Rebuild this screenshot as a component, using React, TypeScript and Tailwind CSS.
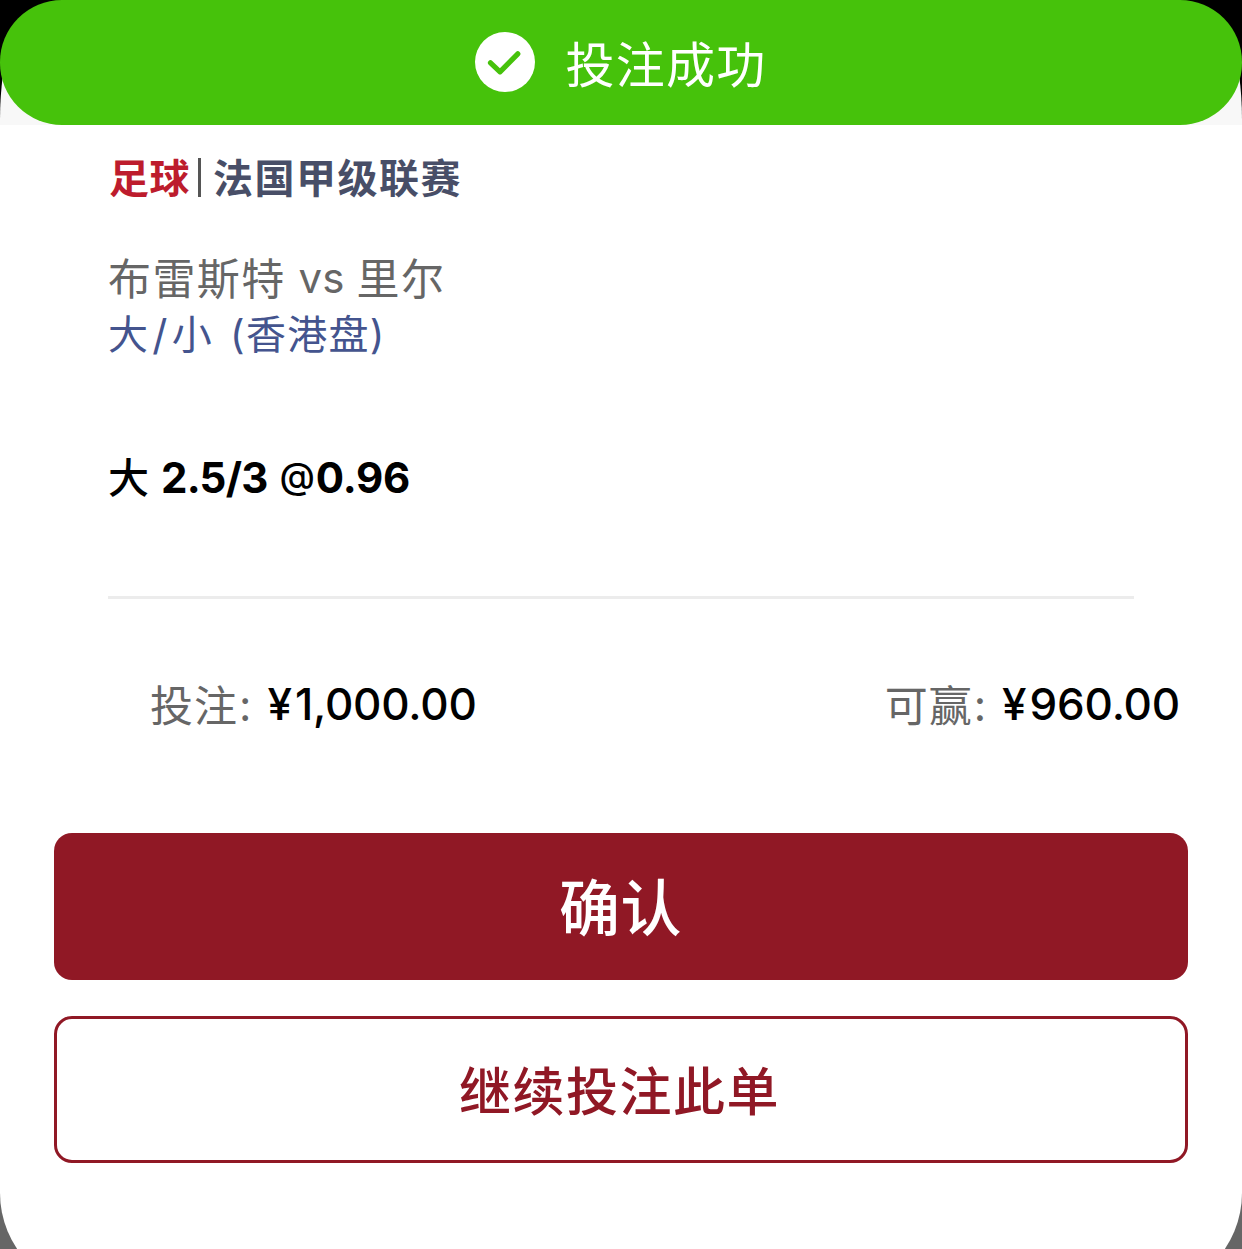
const bet = {
  sport: '足球',
  league: '法国甲级联赛',
}

function SuccessBanner() {
  return (
    <div className="h-[125px] bg-black">
      <div className="h-full rounded-t-[40px_120px] bg-[linear-gradient(transparent_56%,#f8f8f8_56%)]">
        <div className="flex h-full items-center justify-center rounded-[62px] bg-[#46c20b] text-white">
          <svg viewBox="0 0 60 60" className="mb-[2px] h-[60px] w-[60px]" aria-hidden="true">
            <circle cx="30" cy="30" r="30" fill="#fff" />
            <path d="M15.5 30.8 L25 39.8 L42.8 21.8" fill="none" stroke="#46c20b" strokeWidth="5.2" strokeLinecap="round" strokeLinejoin="round" />
          </svg>
          <span className="ml-[30px] pt-[5px] text-[49px] leading-none tracking-[1.3px]">投注成功</span>
        </div>
      </div>
    </div>
  )
}

function Amount({ label, value }: { label: string; value: string }) {
  return (
    <div className="flex items-center whitespace-nowrap">
      <span className="pt-[2px] text-[43px] tracking-[1px] text-[#666]">{label}</span>
      <span className="ml-[1px] text-[43px] text-[#666]">:</span>
      <span className="ml-[16px] pb-[3px] text-[44px] font-medium text-black">¥</span>
      <span className="ml-[3px] pb-[3px] text-[44px] font-medium tracking-[-0.2px] text-black">{value}</span>
    </div>
  )
}

export default function App() {
  return (
    <div className="h-[1249px] w-[1242px] overflow-hidden bg-[#666] font-['Inter','Noto_Sans_CJK_SC',sans-serif]">
      <SuccessBanner />
      <main className="flex h-[1168px] flex-col rounded-b-[100px] bg-white">
        <div className="flex flex-col px-[108px]">
          <div className="mt-[24px] flex h-[58px] items-center text-[40px] leading-none font-bold">
            <span className="pt-[2px] pl-[1px] tracking-[0.5px] text-[#bd1c2d]">{bet.sport}</span>
            <span className="mb-[2px] ml-[8px] h-[39px] w-[3px] bg-[#555]" />
            <span className="ml-[12px] pt-[2px] tracking-[1.5px] text-[#484e67]">{bet.league}</span>
          </div>
          <div className="mt-[43px] flex h-[56px] items-center pt-[3px] text-[43px] leading-none text-[#666]">
            <span className="tracking-[1.4px]">布雷斯特</span>
            <span className="ml-[13px] pb-[3px] text-[42px]">vs</span>
            <span className="ml-[12px] tracking-[1.5px]">里尔</span>
          </div>
          <div className="flex h-[56px] items-center pt-[2px] text-[40px] leading-none tracking-[1.3px] text-[#44548e]">
            <span>大</span>
            <span className="ml-[3px] text-[42px]">/</span>
            <span className="ml-[3px]">小</span>
            <span className="ml-[17px]">(香港盘)</span>
          </div>
          <div className="mt-[88px] flex h-[56px] items-center text-[42px] leading-none font-bold text-black">
            <span className="text-[41px] font-medium">大</span>
            <span className="ml-[12px] tracking-[-0.8px]">2.5/3</span>
            <span className="ml-[12px] pb-[5px] text-[36px] font-medium">@</span>
            <span className="ml-[1px] tracking-[-0.2px]">0.96</span>
          </div>
          <div className="mt-[90px] h-[3px] bg-[#ececec]" />
        </div>
        <div className="mt-[76px] flex h-[60px] items-center justify-between pr-[62px] pl-[150px] leading-none">
          <Amount label="投注" value="1,000.00" />
          <Amount label="可赢" value="960.00" />
        </div>
        <div className="mt-[98px] flex flex-col gap-[36px] px-[54px]">
          <button className="flex h-[147px] items-center justify-center rounded-[18px] bg-[#901825] pt-[6px] pr-[1px] text-[61px] leading-none font-medium tracking-[0.5px] text-white">
            确认
          </button>
          <button className="flex h-[147px] items-center justify-center rounded-[18px] border-[3px] border-[#901825] bg-white pt-[7px] pr-[3px] text-[52px] leading-none font-medium tracking-[1.5px] text-[#901825]">
            继续投注此单
          </button>
        </div>
      </main>
    </div>
  )
}
